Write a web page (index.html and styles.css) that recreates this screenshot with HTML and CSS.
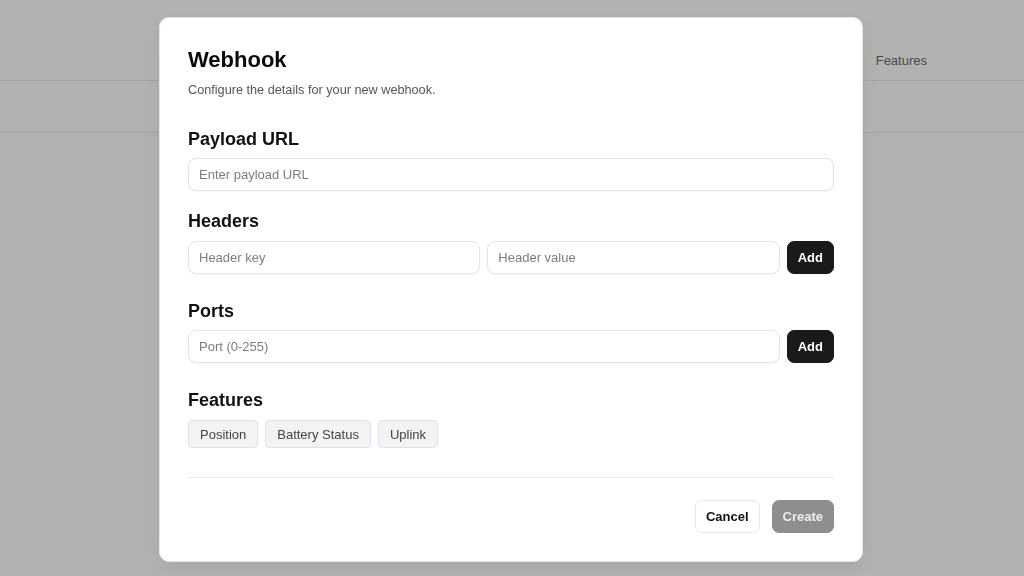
FILE: index.html
```html
<!DOCTYPE html>
<html lang="en">
<head>
<meta charset="utf-8">
<title>Webhook</title>
<link rel="stylesheet" href="styles.css">
</head>
<body>
<div class="page">
  <header class="topbar">
    <nav class="topnav"><span class="navlink">Features</span></nav>
  </header>
  <div class="subbar"></div>
</div>

<div class="overlay">
  <div class="modal" role="dialog" aria-labelledby="mtitle">
    <div class="modal-head">
      <h1 id="mtitle" class="modal-title">Webhook</h1>
      <p class="modal-desc">Configure the details for your new webhook.</p>
    </div>

    <section class="field field-payload">
      <h2 class="field-label">Payload URL</h2>
      <input class="input input-full" type="text" placeholder="Enter payload URL">
    </section>

    <section class="field field-headers">
      <h2 class="field-label">Headers</h2>
      <div class="row">
        <input class="input" type="text" placeholder="Header key">
        <input class="input" type="text" placeholder="Header value">
        <button class="btn btn-dark">Add</button>
      </div>
    </section>

    <section class="field field-ports">
      <h2 class="field-label">Ports</h2>
      <div class="row">
        <input class="input" type="text" placeholder="Port (0-255)">
        <button class="btn btn-dark">Add</button>
      </div>
    </section>

    <section class="field field-features">
      <h2 class="field-label">Features</h2>
      <div class="chips">
        <button class="chip">Position</button>
        <button class="chip">Battery Status</button>
        <button class="chip">Uplink</button>
      </div>
    </section>

    <hr class="divider">

    <div class="footer">
      <button class="btn btn-outline">Cancel</button>
      <button class="btn btn-disabled">Create</button>
    </div>
  </div>
</div>
</body>
</html>
```

FILE: styles.css
```css
* { box-sizing: border-box; }

html, body {
  margin: 0;
  padding: 0;
  height: 100%;
}

body {
  font-family: "Liberation Sans", Arial, sans-serif;
  background: #ffffff;
  color: #111;
}

/* background page */
.page {
  width: 100%;
}

.topbar {
  height: 81px;
  border-bottom: 1px solid #ececec;
  display: flex;
  align-items: flex-start;
  justify-content: flex-end;
  padding: 53px 97px 0 0;
}

.topnav {
  display: flex;
}

.navlink {
  font-size: 13px;
  line-height: 16px;
  color: #6a6a6a;
}

.subbar {
  height: 52px;
  border-bottom: 1px solid #ececec;
}

/* overlay + modal */
.overlay {
  position: fixed;
  inset: 0;
  background: rgba(0, 0, 0, 0.3);
  display: flex;
  align-items: flex-start;
  justify-content: center;
  padding-top: 17px;
}

.modal {
  width: 704px;
  height: 545px;
  margin-right: 2px;
  background: #ffffff;
  border: 1px solid #e6e6e6;
  border-radius: 10px;
  padding: 28px;
  display: flex;
  flex-direction: column;
  box-shadow: 0 8px 24px rgba(0, 0, 0, 0.08);
}

.modal-head {
  display: flex;
  flex-direction: column;
}

.modal-title {
  margin: 0;
  font-size: 22px;
  line-height: 28px;
  font-weight: 700;
  color: #0a0a0a;
}

.modal-desc {
  margin: 6px 0 0;
  font-size: 12.7px;
  line-height: 20px;
  color: #555;
}

.field {
  display: flex;
  flex-direction: column;
}

.field-payload { margin-top: 27px; }
.field-headers { margin-top: 18px; }
.field-ports { margin-top: 25px; }
.field-features { margin-top: 25px; }

.field-label {
  margin: 0 0 8px;
  font-size: 18px;
  line-height: 24px;
  font-weight: 700;
  color: #111;
}

.field-payload .field-label { margin-bottom: 7px; }
.field-ports .field-label { margin-bottom: 7px; }

.row {
  display: flex;
  gap: 7px;
}

.input {
  flex: 1 1 0;
  min-width: 0;
  height: 33px;
  border: 1px solid #e4e4e4;
  border-radius: 8px;
  padding: 0 10px;
  font-family: inherit;
  font-size: 13px;
  color: #111;
  background: #fff;
  box-shadow: 0 1px 2px rgba(0, 0, 0, 0.04);
  outline: none;
}

.input-full {
  flex: none;
  width: 100%;
}

.input::placeholder {
  color: #7d7d7d;
}

.btn {
  height: 33px;
  padding: 0 10px;
  border-radius: 7px;
  font-family: inherit;
  font-size: 13px;
  font-weight: 700;
  border: 1px solid transparent;
  cursor: pointer;
  flex: none;
}

.btn-dark {
  background: #1a1a1a;
  border-color: #1a1a1a;
  color: #ffffff;
}

.chips {
  display: flex;
  gap: 7px;
}

.chip {
  height: 28px;
  padding: 0 11px;
  border: 1px solid #dfe2e6;
  border-radius: 4px;
  background: #f1f3f5;
  font-family: inherit;
  font-size: 13px;
  color: #444;
}

.divider {
  margin: 29px 0 0;
  border: 0;
  border-top: 1px solid #ebebeb;
  height: 0;
}

.footer {
  margin-top: 22px;
  display: flex;
  justify-content: flex-end;
  gap: 12px;
}

.btn-outline {
  background: #ffffff;
  border-color: #e6e6e6;
  color: #111;
}

.btn-disabled {
  background: #8e8e8e;
  border-color: #8e8e8e;
  color: #ececec;
}
```
